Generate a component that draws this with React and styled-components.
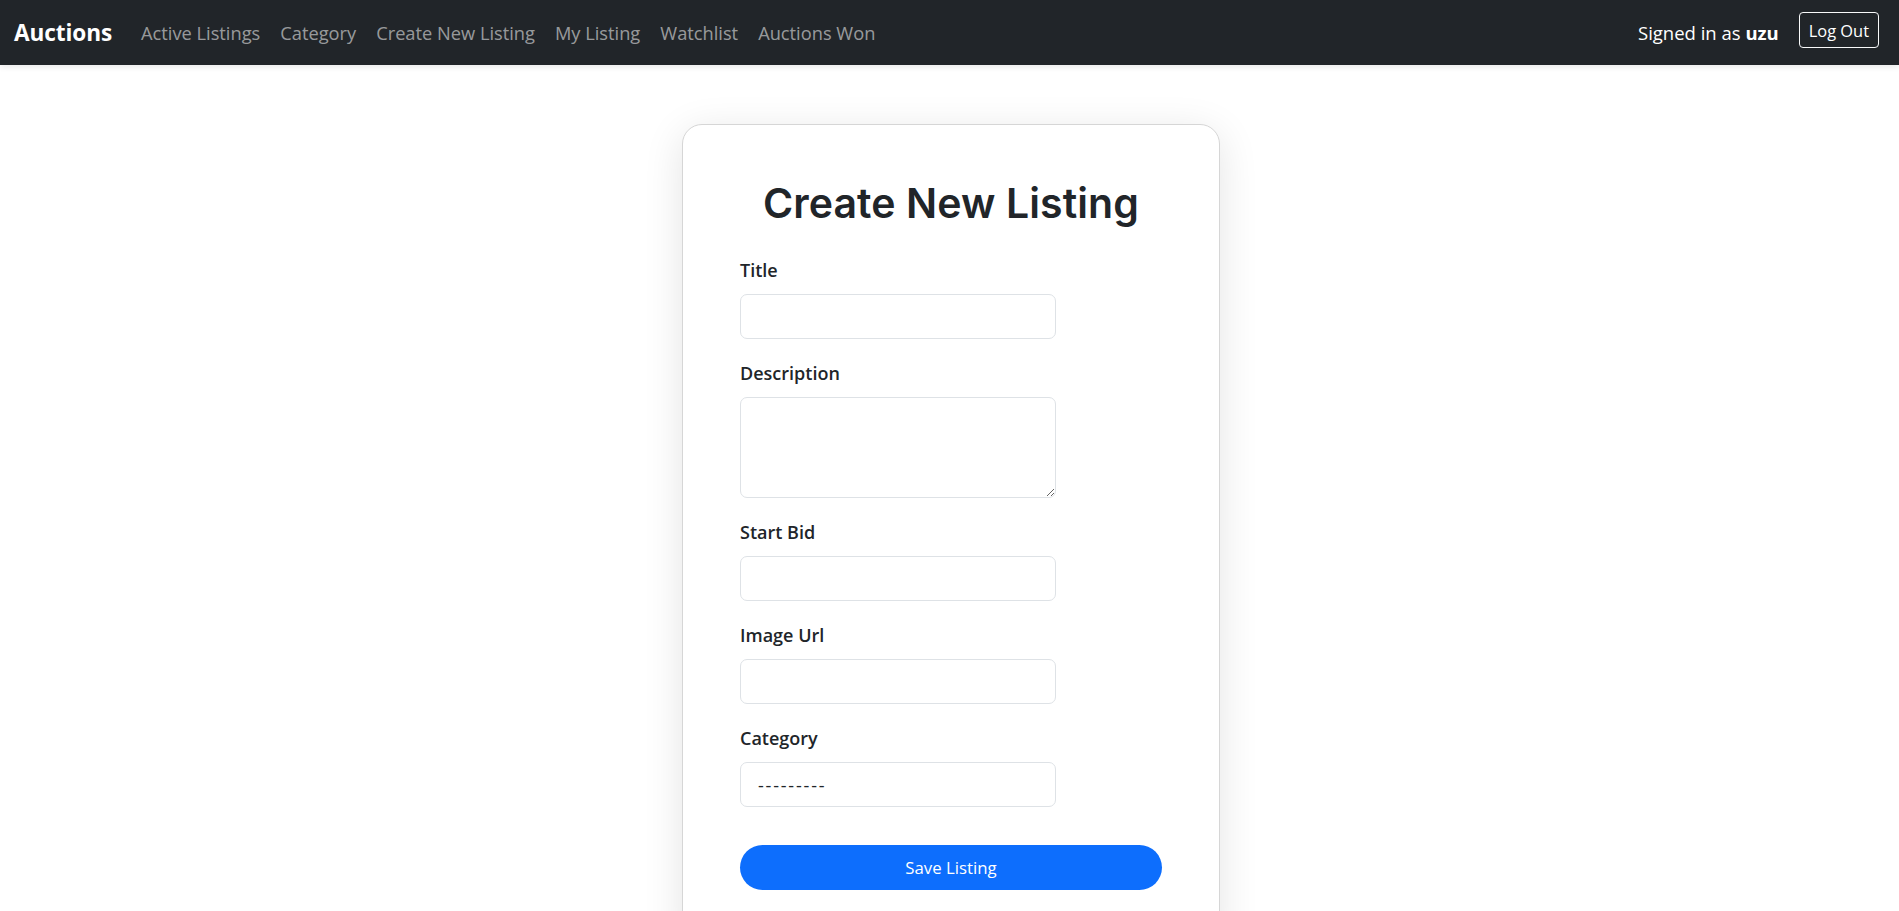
import React from "react";
import styled, { createGlobalStyle } from "styled-components";

const GlobalStyle = createGlobalStyle`
  html, body {
    margin: 0;
    padding: 0;
    background: #ffffff;
    overflow: hidden;
  }
  body {
    font-family: "Open Sans", "Noto Sans", sans-serif;
    color: #212529;
  }
  * { box-sizing: border-box; }
`;

const Page = styled.div`
  min-height: 100vh;
  background: #ffffff;
`;

const NavBar = styled.nav`
  height: 65px;
  background: #212529;
  display: flex;
  align-items: center;
  justify-content: space-between;
  padding: 0 20px 0 14px;
  box-shadow: 0 2px 6px rgba(0, 0, 0, 0.09);
  position: relative;
  z-index: 2;
`;

const LeftGroup = styled.div`
  display: flex;
  align-items: center;
`;

const Brand = styled.a`
  font-size: 22.6px;
  font-weight: 700;
  color: #ffffff;
  text-decoration: none;
  margin-right: 29px;
  line-height: 30px;
  letter-spacing: -0.1px;
`;

const NavLinks = styled.div`
  display: flex;
  align-items: center;
  gap: 20px;
`;

const NavLink = styled.a`
  font-size: 18.25px;
  line-height: 30px;
  color: rgba(255, 255, 255, 0.55);
  text-decoration: none;
  white-space: nowrap;
`;

const RightGroup = styled.div`
  display: flex;
  align-items: center;
  gap: 20px;
`;

const SignedIn = styled.span`
  font-size: 18.5px;
  line-height: 30px;
  color: #ffffff;
  b { font-weight: 700; }
`;

const LogOutButton = styled.button`
  font-family: "Open Sans", "Noto Sans", sans-serif;
  font-size: 16.4px;
  height: 36px;
  padding: 0 9px;
  margin-bottom: 5px;
  color: #ffffff;
  background: transparent;
  border: 1.3px solid #f8f9fa;
  border-radius: 4px;
  cursor: pointer;
`;

const Main = styled.main`
  display: flex;
  justify-content: center;
  padding-top: 59px;
  padding-left: 3px;
`;

const Card = styled.section`
  width: 538px;
  background: #ffffff;
  border: 1px solid #d6d6d6;
  border-radius: 20px;
  box-shadow: 0 8px 40px rgba(0, 0, 0, 0.11);
  padding: 54px 57px 60px;
`;

const Heading = styled.h2`
  margin: 0 0 28px;
  text-align: center;
  font-family: "Inter", "Open Sans", sans-serif;
  font-weight: 600;
  font-size: 41px;
  line-height: 1.2;
  color: #212529;
  letter-spacing: 0.1px;
`;

const Form = styled.form`
  display: flex;
  flex-direction: column;
`;

const Field = styled.div`
  display: flex;
  flex-direction: column;
  align-items: flex-start;
  margin-bottom: 20px;
`;

const Label = styled.label`
  font-size: 18px;
  font-weight: 600;
  line-height: 28px;
  margin-bottom: 10px;
  color: #212529;
`;

const fieldBase = `
  width: 316px;
  border: 1px solid #dee2e6;
  border-radius: 7px;
  background: #ffffff;
  font-family: "Open Sans", "Noto Sans", sans-serif;
  font-size: 18px;
  color: #212529;
  outline: none;
`;

const TextInput = styled.input`
  ${fieldBase}
  height: 45px;
  padding: 0 15px;
`;

const TextArea = styled.textarea`
  ${fieldBase}
  height: 101px;
  padding: 8px 15px;
  resize: vertical;
  display: block;
`;

const Select = styled.select`
  ${fieldBase}
  height: 45px;
  padding: 0 17px;
  appearance: none;
  -webkit-appearance: none;
  letter-spacing: 1.8px;
`;

const SaveButton = styled.button`
  margin-top: 18px;
  width: 100%;
  height: 45px;
  border: none;
  border-radius: 999px;
  background: #0d6efd;
  color: #ffffff;
  font-family: "Open Sans", "Noto Sans", sans-serif;
  font-size: 16.8px;
  cursor: pointer;
`;

const links = [
  "Active Listings",
  "Category",
  "Create New Listing",
  "My Listing",
  "Watchlist",
  "Auctions Won",
];

export default function App() {
  return (
    <Page>
      <GlobalStyle />
      <NavBar>
        <LeftGroup>
          <Brand href="#">Auctions</Brand>
          <NavLinks>
            {links.map((l) => (
              <NavLink key={l} href="#">
                {l}
              </NavLink>
            ))}
          </NavLinks>
        </LeftGroup>
        <RightGroup>
          <SignedIn>
            Signed in as <b>uzu</b>
          </SignedIn>
          <LogOutButton type="button">Log Out</LogOutButton>
        </RightGroup>
      </NavBar>
      <Main>
        <Card>
          <Heading>Create New Listing</Heading>
          <Form onSubmit={(e) => e.preventDefault()}>
            <Field>
              <Label htmlFor="title">Title</Label>
              <TextInput id="title" type="text" />
            </Field>
            <Field>
              <Label htmlFor="description">Description</Label>
              <TextArea id="description" rows={3} />
            </Field>
            <Field>
              <Label htmlFor="startBid">Start Bid</Label>
              <TextInput id="startBid" type="text" />
            </Field>
            <Field>
              <Label htmlFor="imageUrl">Image Url</Label>
              <TextInput id="imageUrl" type="text" />
            </Field>
            <Field>
              <Label htmlFor="category">Category</Label>
              <Select id="category" defaultValue="">
                <option value="">---------</option>
              </Select>
            </Field>
            <SaveButton type="submit">Save Listing</SaveButton>
          </Form>
        </Card>
      </Main>
    </Page>
  );
}
